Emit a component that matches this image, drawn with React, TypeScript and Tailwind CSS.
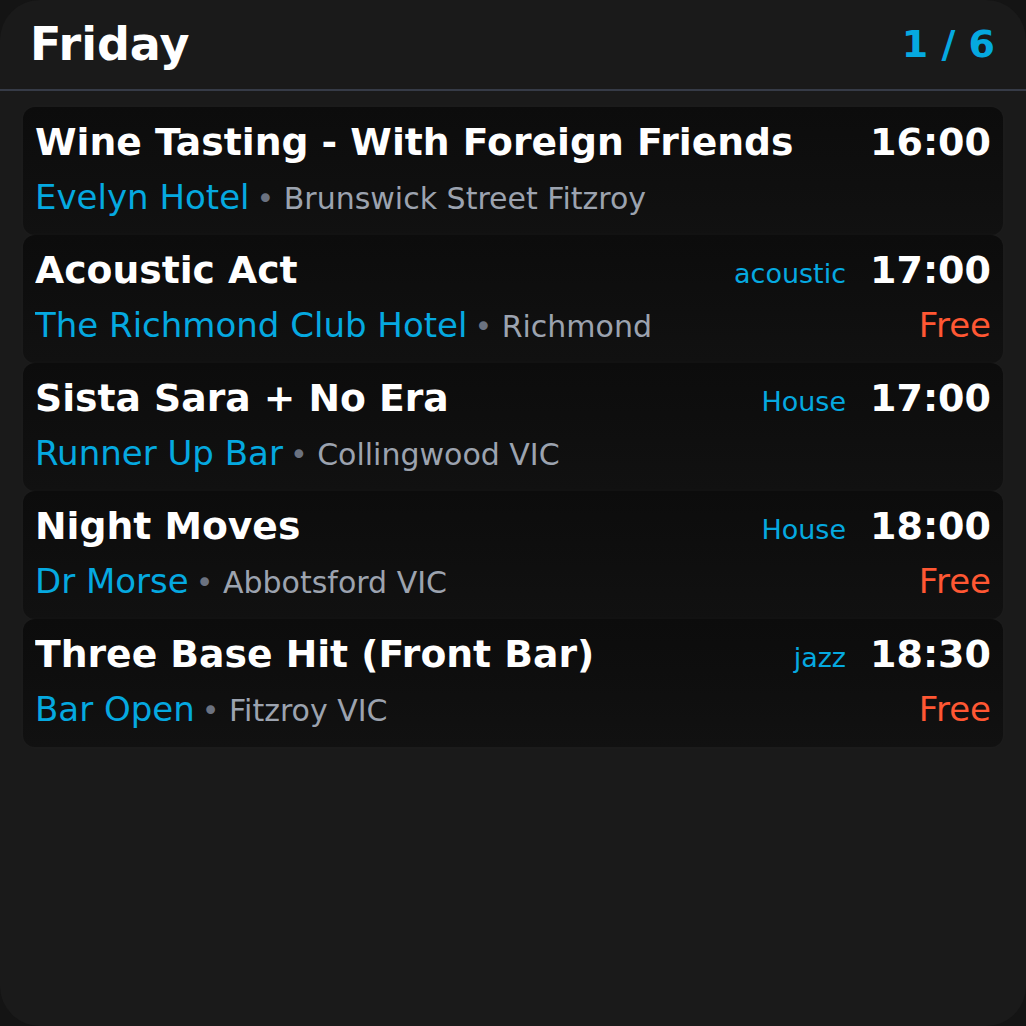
import React from 'react';

interface EventItem {
  title: string;
  venue: string;
  location: string;
  time: string;
  tag?: string;
  free?: boolean;
}

const events: EventItem[] = [
  { title: 'Wine Tasting - With Foreign Friends', venue: 'Evelyn Hotel', location: 'Brunswick Street Fitzroy', time: '16:00' },
  { title: 'Acoustic Act', venue: 'The Richmond Club Hotel', location: 'Richmond', time: '17:00', tag: 'acoustic', free: true },
  { title: 'Sista Sara + No Era', venue: 'Runner Up Bar', location: 'Collingwood VIC', time: '17:00', tag: 'House' },
  { title: 'Night Moves', venue: 'Dr Morse', location: 'Abbotsford VIC', time: '18:00', tag: 'House', free: true },
  { title: 'Three Base Hit (Front Bar)', venue: 'Bar Open', location: 'Fitzroy VIC', time: '18:30', tag: 'jazz', free: true },
];

function EventCard({ event }: { event: EventItem }) {
  return (
    <div className="flex flex-col gap-[12px] rounded-xl bg-gradient-to-b from-[#0c0c0c] to-[#111111] px-3 pt-[13px] pb-[19px] shadow-[0_0_10px_rgba(255,255,255,0.025)]">
      {/* Title row */}
      <div className="flex items-baseline justify-between h-[44px]">
        <span className="text-[37.7px] leading-[44px] font-bold text-white truncate">{event.title}</span>
        <div className="flex items-baseline gap-[24px] shrink-0">
          {event.tag && <span className="text-[27px] text-[#05a9e0]">{event.tag}</span>}
          <span className="text-[38px] leading-[44px] font-bold text-white">{event.time}</span>
        </div>
      </div>

      {/* Venue row */}
      <div className="flex items-baseline justify-between h-[40px]">
        <div className="flex items-baseline gap-[7px] truncate">
          <span className="text-[34px] leading-[40px] text-[#05a9e0]">{event.venue}</span>
          <span className="text-[30px] text-[#9ca3af]">
            <span className="text-[#6b7280]">•</span> {event.location}
          </span>
        </div>
        {event.free && <span className="text-[34px] leading-[40px] text-[#ff5733]">Free</span>}
      </div>
    </div>
  );
}

export default function App() {
  return (
    <div className="w-[1026px] h-[1026px] bg-[#141414]" style={{ fontFamily: '"DejaVu Sans", Verdana, sans-serif' }}>
      <div className="h-full rounded-[40px] bg-[#1a1a1a] overflow-hidden flex flex-col">
        {/* Header */}
        <div className="h-[91px] shrink-0 flex items-center justify-between pl-[30px] pr-[31px] border-b-2 border-[#363b47]">
          <span className="text-[46px] font-bold text-white">Friday</span>
          <span className="text-[38px] font-bold text-[#05a9e0]">1 / 6</span>
        </div>

        {/* Event list */}
        <div className="flex flex-col px-[23px] pt-[16px]">
          {events.map((e) => (
            <EventCard key={e.title} event={e} />
          ))}
        </div>
      </div>
    </div>
  );
}
